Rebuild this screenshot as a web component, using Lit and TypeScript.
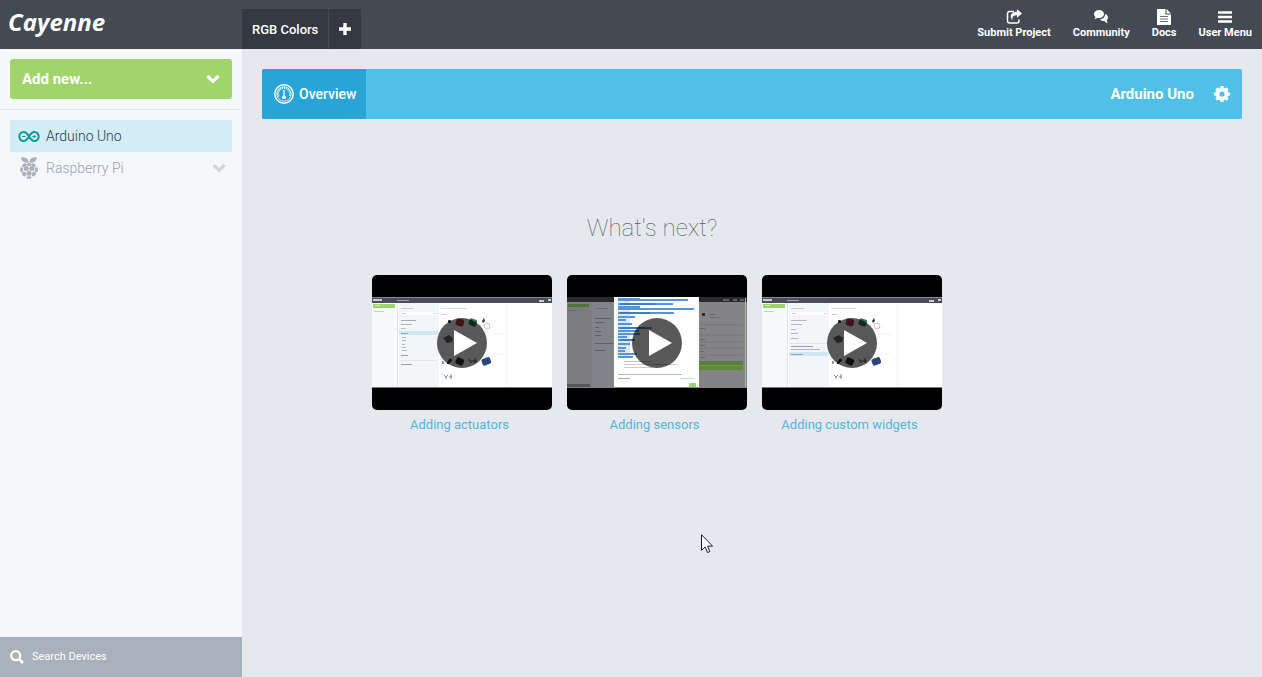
import { LitElement, html, svg, css } from "lit";
import { customElement, property } from "lit/decorators.js";

type Line = [number, number, number, string];

const MENU_LINES: Line[] = [
  [2, 36, 10, "#c8ccd2"], [29, 33, 13, "#c6cbd2"], [30, 38, 4, "#ccd0d6"], [62, 38, 2, "#c6cbd2"],
];
const PARTS = svg`
  <rect x="76" y="45" width="3" height="3" rx="1" fill="#222"/>
  <rect x="84" y="44" width="8" height="7" rx="2" fill="#b83a4e" transform="rotate(14 88 47)"/>
  <rect x="97" y="44" width="8" height="7" rx="2" fill="#357a5a" transform="rotate(20 101 47)"/>
  <path d="M110 46l2-3 1 3-2 2z" fill="#333"/>
  <circle cx="115" cy="51" r="3" fill="none" stroke="#d9b7c0"/>
  <path d="M71 63l6-3 4 3-1 4-5 1z" fill="#666"/>
  <path d="M71 89v-3M75 88l3-4 2 1-4 4z" stroke="#333" fill="#333"/>
  <rect x="84" y="83" width="8" height="7" rx="2" fill="#333" transform="rotate(25 88 86)"/>
  <path d="M97 84l2 4M103 83v5M99 86h6" stroke="#555" fill="none"/>
  <rect x="110" y="83" width="9" height="7" rx="2" fill="#2c4878" transform="rotate(-20 114 87)"/>
  <path d="M72 100l2 2 2-2M74 101v3M77 102h3M79 99v5" stroke="#888" fill="none"/>`;

const lines = (items: Line[]) =>
  items.map(([x, y, w, c]) => svg`<rect x=${x} y=${y} width=${w} height="1" fill=${c}/>`);

const deviceScene = (selected: number, rows: Line[]) => svg`
  <rect x="0" y="22" width="180" height="91" fill="#fff"/>
  <rect x="0" y="28" width="25" height="84" fill="#f7f8fb"/>
  <rect x="27" y="28" width="40" height="84" fill="#f3f5f9"/>
  <rect x="25" y="28" width="1" height="84" fill="#e3e6eb"/>
  <path d="M70 42v67M135 28v84M70 59h61M70 79h61" stroke="#f4f4f6" fill="none"/>
  <rect x="0" y="22" width="180" height="6" fill="#4b4d59"/>
  <rect x="0" y="22" width="180" height="1" fill="#888994"/>
  <path d="M1 25h9M167 26h5M176 25h3" stroke="#c9cad0" stroke-width="2" fill="none"/>
  <rect x="25" y="25" width="12" height="1" fill="#a0a1aa"/>
  <rect x="1" y="29" width="22" height="4" fill="#9bd46a"/>
  <rect x="3" y="30" width="5" height="1" fill="#d5efbf"/>
  <rect x="29" y="37" width="35" height="3" fill="#fff"/>
  <rect x="27" y=${selected} width="39" height="4" fill="#cfe9f4"/>
  <rect x="69" y="33" width="25" height="1" fill="#d6d8dc"/>
  <rect x="70" y="39" width="5" height="1" fill="#c8cacf"/>
  ${lines(MENU_LINES)}${lines(rows)}${PARTS}
  <rect x="0" y="112" width="180" height="1" fill="#77777a"/>`;

const ACTUATORS = deviceScene(56, [
  [29, 45, 15, "#a6abb3"], [29, 49, 11, "#b0b5bc"], [29, 53, 5, "#b5bac2"], [29, 58, 7, "#83a8ba"],
  [30, 62, 4, "#b5bac2"], [30, 65, 4, "#b5bac2"], [30, 69, 3, "#b5bac2"], [30, 72, 4, "#b5bac2"],
  [30, 75, 5, "#b5bac2"], [29, 80, 7, "#9aa0aa"], [29, 89, 11, "#9aa0aa"], [28, 85, 37, "#e3e6eb"],
]);

const WIDGETS = deviceScene(77, [
  [29, 45, 16, "#b5bac2"], [29, 49, 11, "#b5bac2"], [29, 54, 5, "#b5bac2"], [29, 58, 7, "#b5bac2"],
  [29, 63, 7, "#b5bac2"], [28, 68, 37, "#dfe2e8"], [29, 71, 22, "#9aa0aa"], [29, 74, 29, "#b0b5bc"],
  [29, 79, 12, "#83a8ba"],
]);

const CODE: [number, number][] = [
  [23, 22], [24, 70], [28, 55], [31, 22], [33, 76], [37, 56], [41, 17], [44, 8], [48, 14],
  [52, 34], [55, 21], [58, 22], [61, 9], [64, 17], [68, 12], [72, 8], [75, 7], [78, 19], [81, 15],
];

const SENSORS = svg`
  <rect x="0" y="22" width="180" height="91" fill="#848486"/>
  <rect x="0" y="28" width="25" height="84" fill="#7b7c7e"/>
  <rect x="25" y="28" width="21" height="84" fill="#808387"/>
  <rect x="0" y="22" width="180" height="5" fill="#29292e"/>
  <path d="M156 25h6M166 25h4M173 25h4" stroke="#99999c" fill="none"/>
  <rect x="1" y="29" width="21" height="3" fill="#4e7434"/>
  <rect x="0" y="109" width="23" height="3" fill="#54565c"/>
  <path d="M133 50h43M133 60h43M133 67h43M133 73h43M133 80h43" stroke="#777779" fill="none"/>
  <rect x="135" y="38" width="3" height="3" fill="#2b2b2d"/>
  <rect x="131" y="86" width="45" height="4" fill="#56832f"/>
  <rect x="131" y="91" width="45" height="4" fill="#5f8a3c"/>
  <rect x="178" y="23" width="1" height="89" fill="#b0b0b0"/>
  ${lines([[2, 35, 8, "#666"], [29, 33, 12, "#696b70"], [28, 43, 16, "#5c5f66"], [28, 47, 9, "#5c5f66"],
    [28, 52, 4, "#5c5f66"], [28, 56, 6, "#5c5f66"], [28, 60, 6, "#5c5f66"], [28, 68, 18, "#5c5f66"],
    [28, 75, 10, "#5c5f66"], [143, 39, 5, "#606062"], [143, 42, 11, "#6c6c6e"], [133, 53, 5, "#666"],
    [133, 64, 5, "#666"], [133, 70, 5, "#666"], [133, 76, 4, "#666"], [133, 82, 5, "#666"]])}
  <rect x="47" y="22" width="85" height="90" fill="#fff"/>
  <rect x="51" y="24" width="12" height="59" fill="#dbe8f6"/>
  ${CODE.map(([y, w]) => svg`<rect x="51" y=${y} width=${w} height="2" fill="#5795d6"/>`)}
  <path d="M53 29h35M53 38h30M53 53h25M53 65h15" stroke="#2865ae" fill="none"/>
  ${lines([[57, 86, 28, "#bfc1c5"], [57, 89, 53, "#d3c5c8"], [57, 92, 28, "#c9cbd0"],
    [51, 99, 64, "#b9b9bc"], [51, 103, 12, "#a6a6aa"], [113, 103, 14, "#b9dce9"]])}
  <rect x="122" y="108" width="7" height="4" fill="#9bd46a"/>`;

const VIDEOS = [
  { title: "Adding actuators", scene: ACTUATORS },
  { title: "Adding sensors", scene: SENSORS },
  { title: "Adding custom widgets", scene: WIDGETS },
];

const CHEVRON = html`<svg class="chevron" width="14" height="10" viewBox="0 0 14 10" aria-hidden="true">
  <path d="M1.500 2l5.500 5.300L12.500 2" fill="none" stroke="currentColor" stroke-width="3.200"/></svg>`;

const SHARE = html`<svg width="16" height="16" viewBox="0 0 16 16" aria-hidden="true">
  <path d="M8 2.500H3.500a2 2 0 0 0-2 2v7.500a2 2 0 0 0 2 2h7.500a2 2 0 0 0 2-2V10.500" fill="none" stroke="#fff" stroke-width="1.500"/>
  <path d="M11 .2l5 4.300-5 4.300V6.300C7.500 6.200 6 7.600 6.400 11 3 7.500 5 2.900 11 2.800z" fill="#fff"/></svg>`;
const CHAT = html`<svg width="16" height="16" viewBox="0 0 16 16" aria-hidden="true">
  <path d="M6 1c2.900 0 5 1.700 5 4s-2.100 4-5 4c-.6 0-1-.1-1.400-.2C3.500 9.600 2.500 10 1.300 10c.7-.7 1.100-1.300 1.200-2C1.500 7.200 1 6.200 1 5c0-2.300 2.100-4 5-4z" fill="#fff"/>
  <path d="M12 5c1.800.5 3 1.700 3 3.400 0 1-.5 1.900-1.300 2.500.1 1 .5 2.200 1.100 3.100-1.500 0-2.500-.7-3.400-2-2 .2-3.600-.5-4.400-1.800C10 10.200 12.300 8 12 5z" fill="#fff"/></svg>`;
const DOC = html`<svg width="16" height="16" viewBox="0 0 16 16" aria-hidden="true">
  <path d="M1 0h8.500v5.500H15V16H1z" fill="#fff"/><path d="M10.500 0L15 4.500h-4.500z" fill="#fff"/>
  <path d="M4 7.500h8M4 10h8M4 12.500h8" stroke="#6b7079" stroke-width="1"/></svg>`;
const BARS = html`<svg width="16" height="16" viewBox="0 0 16 16" aria-hidden="true">
  <path d="M1 3.500h14M1 8h14M1 12.500h14" stroke="#fff" stroke-width="2.600"/></svg>`;

const GAUGE = html`<svg width="20" height="20" viewBox="0 0 20 20" aria-hidden="true">
  <circle cx="10" cy="10" r="9.200" fill="none" stroke="#fff" stroke-width="1.500"/>
  <circle cx="10" cy="10" r="7.200" fill="none" stroke="#fff" stroke-width=".7"/>
  <path d="M4.600 12.500a6 6 0 1 1 10.800 0" fill="none" stroke="#fff" stroke-width="2" stroke-dasharray="1 1"/>
  <path d="M10 6v7" stroke="#fff" stroke-width="1.300"/><circle cx="10" cy="13.300" r="1.900" fill="#fff"/></svg>`;

const GEAR = html`<svg width="16" height="16" viewBox="0 0 16 16" aria-hidden="true">
  <g fill="#fff">${[0, 45, 90, 135].map(
    (a) => svg`<rect x="6.200" y="0" width="3.600" height="16" rx="1" transform="rotate(${a} 8 8)"/>`,
  )}<circle cx="8" cy="8" r="6.200"/></g><circle cx="8" cy="8" r="2.600" fill="#4fc0e8"/></svg>`;

const ARDUINO = html`<svg width="22" height="11" viewBox="0 0 22 11" aria-hidden="true">
  <g fill="none" stroke="#0f979c"><path stroke-width="2" d="M11 5.500C9.500 3 8 1 5.800 1a4.500 4.500 0 0 0 0 9C8 10 9.500 8 11 5.500S14 1 16.200 1a4.500 4.500 0 0 1 0 9C14 10 12.500 8 11 5.500z"/>
  <path stroke-width="1" d="M4 5.500h3.500M14.500 5.500H18M16.250 3.800v3.400"/></g></svg>`;

const RASPBERRY = html`<svg width="18" height="22" viewBox="0 0 18 22" aria-hidden="true">
  <g fill="#a9b1bc"><path d="M8.600 5.500C5 6.500 1.500 4.500 1 .8 2.500.2 3.500.2 4.500.5 6.800.6 8.600 2.500 8.600 5.500zM9.400 5.500C13 6.500 16.500 4.500 17 .8 15.500.2 14.500.2 13.500.5 11.200.6 9.400 2.500 9.400 5.500z"/>
  <ellipse cx="9" cy="7.500" rx="2.700" ry="1.600"/><ellipse cx="4.300" cy="8.200" rx="2.300" ry="1.600" transform="rotate(-38 4.300 8.200)"/>
  <ellipse cx="13.700" cy="8.200" rx="2.300" ry="1.600" transform="rotate(38 13.700 8.200)"/>
  <circle cx="6.200" cy="11.600" r="2.500"/><circle cx="11.800" cy="11.600" r="2.500"/>
  <ellipse cx="1.600" cy="12.700" rx="1.500" ry="2.600"/><ellipse cx="16.400" cy="12.700" rx="1.500" ry="2.600"/>
  <circle cx="9" cy="16.200" r="2.500"/><ellipse cx="4.200" cy="17" rx="2" ry="2.500" transform="rotate(-25 4.200 17)"/>
  <ellipse cx="13.800" cy="17" rx="2" ry="2.500" transform="rotate(25 13.800 17)"/><ellipse cx="9" cy="20.500" rx="2.600" ry="1.300"/></g></svg>`;

const SEARCH = html`<svg width="14" height="14" viewBox="0 0 14 14" aria-hidden="true">
  <circle cx="5.700" cy="5.700" r="4.500" fill="none" stroke="#fff" stroke-width="2.200"/>
  <path d="M9 9l4 4" stroke="#fff" stroke-width="2.600"/></svg>`;

const reset = css`
  * { box-sizing: border-box; }
  svg { display: block; flex: none; }
  button { font: inherit; border: 0; margin: 0; padding: 0; background: none; color: inherit; cursor: pointer; }
  a { color: inherit; text-decoration: none; }
`;

@customElement("top-bar")
export class TopBar extends LitElement {
  static styles = [reset, css`
    :host { display: flex; height: 49px; background: #444a54; color: #fff; }
    .brand { width: 242px; padding: 6px 8px; font: italic 700 24px/32px "Open Sans", sans-serif; }
    .tabs { display: flex; align-items: stretch; gap: 1px; padding-top: 9px; margin-right: auto; }
    .tab { display: flex; align-items: center; justify-content: center; background: #343841; padding: 0 10px; font-size: 13px; font-weight: 500; }
    .menu { display: flex; gap: 22px; padding: 9px 10px 0 0; font-size: 11px; font-weight: 700; line-height: 16px; }
    .menu a { display: flex; flex-direction: column; align-items: center; white-space: nowrap; }
  `];
  render() {
    return html`
      <a class="brand" href="#">Cayenne</a>
      <nav class="tabs" aria-label="Projects">
        <button class="tab">RGB Colors</button>
        <button class="tab" aria-label="Add project">
          <svg width="12" height="12" viewBox="0 0 12 12" aria-hidden="true"><path d="M6 0v12M0 6h12" stroke="#fff" stroke-width="3.400"/></svg>
        </button>
      </nav>
      <nav class="menu" aria-label="Main">
        <a href="#">${SHARE}Submit Project</a>
        <a href="#">${CHAT}Community</a>
        <a href="#">${DOC}Docs</a>
        <a href="#">${BARS}User Menu</a>
      </nav>`;
  }
}

@customElement("side-bar")
export class SideBar extends LitElement {
  static styles = [reset, css`
    :host { display: flex; flex-direction: column; width: 242px; flex: none; background: #f5f7fb; }
    .add { padding: 10px; border-bottom: 1px solid #e5e8ed; }
    .add button { display: flex; align-items: center; justify-content: space-between; width: 100%; height: 40px; padding: 0 12px; border-radius: 3px; background: #a1d46a; color: #fff; font-size: 15px; font-weight: 700; }
    .devices { padding: 10px; flex: 1; }
    .device { display: flex; align-items: center; width: 100%; height: 32px; padding-right: 6px; font-size: 14px; font-weight: 300; color: #98a2b0; }
    .device.active { background: #d3edf6; color: #343841; }
    .icon { display: flex; justify-content: center; width: 36px; padding-left: 2px; }
    .name { flex: 1; text-align: left; }
    .device .chevron { color: #d3d7dd; }
    .search { display: flex; align-items: center; gap: 8px; height: 40px; padding: 0 10px; background: #a9b1bc; }
    input { flex: 1; min-width: 0; border: 0; outline: 0; padding: 0; background: none; color: #fff; font: inherit; font-size: 11px; line-height: 16px; }
    input::placeholder { color: #fff; opacity: 1; }
  `];
  render() {
    return html`
      <div class="add"><button>Add new...${CHEVRON}</button></div>
      <nav class="devices" aria-label="Devices">
        <button class="device active"><span class="icon">${ARDUINO}</span><span class="name">Arduino Uno</span></button>
        <button class="device"><span class="icon">${RASPBERRY}</span><span class="name">Raspberry Pi</span>${CHEVRON}</button>
      </nav>
      <label class="search">${SEARCH}<input type="search" placeholder="Search Devices" aria-label="Search Devices" /></label>`;
  }
}

@customElement("video-card")
export class VideoCard extends LitElement {
  @property() heading = "";
  @property({ attribute: false }) scene: unknown = null;
  static styles = [reset, css`
    :host { display: block; width: 180px; }
    .thumb { display: block; border-radius: 5px; overflow: hidden; background: #000; }
    .caption { display: block; padding: 5px 5px 0 0; text-align: center; font-size: 13px; line-height: 20px; color: #56b4dc; }
  `];
  render() {
    return html`<a href="#">
      <span class="thumb"><svg width="180" height="135" viewBox="0 0 180 135" aria-hidden="true">
        <defs><filter id="soft" x="0" y="0" width="1" height="1"><feGaussianBlur stdDeviation="0.7"/></filter></defs>
        <g filter="url(#soft)">${this.scene}</g>
        <circle cx="90" cy="68" r="25" fill="#000" fill-opacity=".65"/>
        <path d="M82 55l23 13-23 13z" fill="#fff"/>
      </svg></span>
      <span class="caption">${this.heading}</span>
    </a>`;
  }
}

@customElement("app-root")
export class AppRoot extends LitElement {
  static styles = [reset, css`
    :host { display: flex; flex-direction: column; min-height: 100vh; background: #e5e9ee; font-family: Roboto, "Liberation Sans", sans-serif; }
    .body { display: flex; flex: 1; }
    main { flex: 1; min-width: 0; padding: 20px; position: relative; }
    .bar { display: flex; align-items: center; height: 50px; border-radius: 2px; overflow: hidden; background: #4fc0e8; color: #fff; }
    .overview { display: flex; align-items: center; gap: 5px; height: 100%; padding: 0 10px 0 12px; background: #28a5d6; font-size: 14px; font-weight: 500; }
    .title { margin: 0 20px 0 auto; font-size: 15px; font-weight: 700; }
    .gear { margin-right: 12px; }
    .next { padding: 92px 200px 0 0; }
    h1 { margin: 0; text-align: center; font-size: 24px; line-height: 34px; font-weight: 100; color: #56606c; }
    .videos { display: flex; justify-content: center; gap: 15px; padding: 30px 0 0 10px; }
    .cursor { position: absolute; left: 459px; top: 485px; }
  `];
  render() {
    return html`
      <top-bar></top-bar>
      <div class="body">
        <side-bar></side-bar>
        <main>
          <div class="bar">
            <button class="overview">${GAUGE}Overview</button>
            <span class="title">Arduino Uno</span>
            <button class="gear" aria-label="Settings">${GEAR}</button>
          </div>
          <section class="next">
            <h1>What's next?</h1>
            <div class="videos">
              ${VIDEOS.map((v) => html`<video-card .heading=${v.title} .scene=${v.scene}></video-card>`)}
            </div>
          </section>
          <svg class="cursor" width="13" height="20" viewBox="0 0 13 20" aria-hidden="true">
            <path d="M.5.700v15.600l3.600-3.300 2.400 5.500 2.400-1-2.400-5.400h5z" fill="#fff" stroke="#1a1d33"/></svg>
        </main>
      </div>`;
  }
}
